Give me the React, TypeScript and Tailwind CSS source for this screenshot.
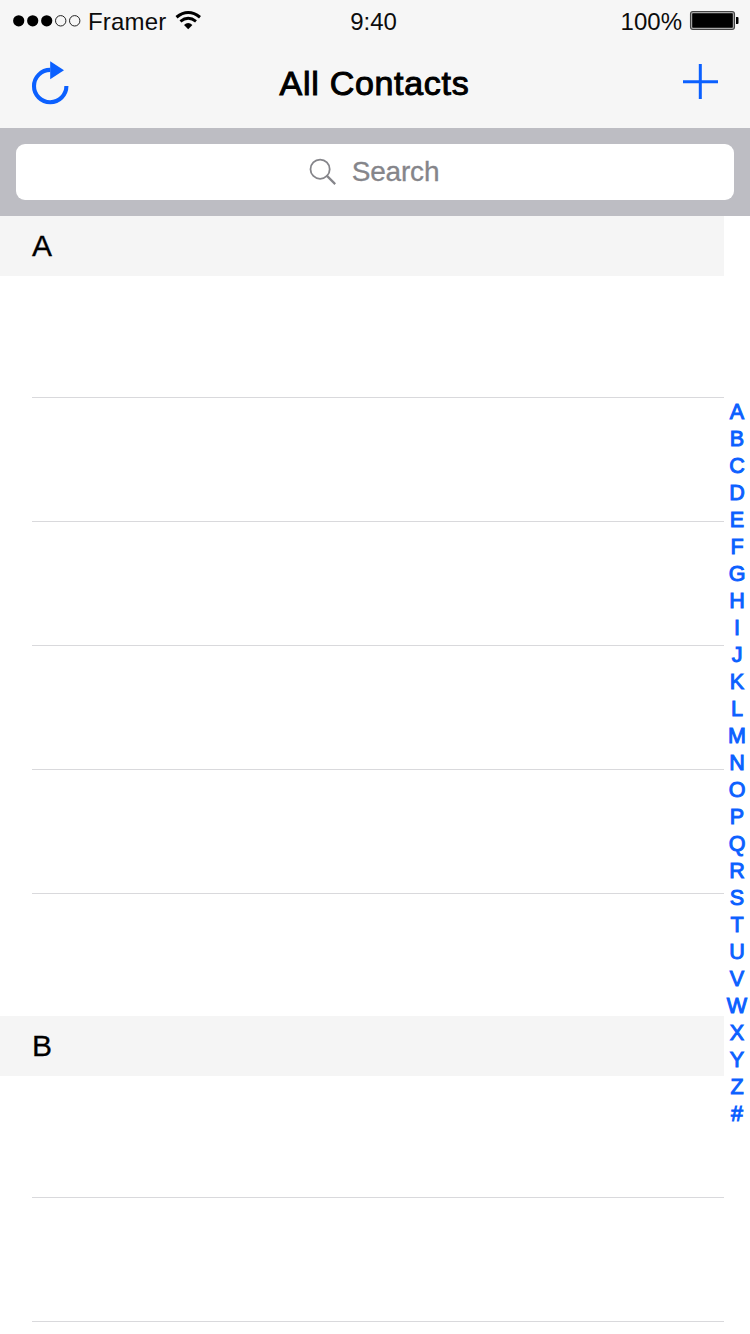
const LETTERS = 'ABCDEFGHIJKLMNOPQRSTUVWXYZ#'.split('');

function StatusBar() {
  return (
    <div className="grid h-10 grid-cols-3 items-start text-[24px] leading-[28px] text-[#0c0c0c]">
      <div className="flex pt-2 pl-3">
        <svg className="mt-[5px] h-4 w-[70px] shrink-0" viewBox="12 13 70 16" aria-hidden="true">
          <circle cx="18.7" cy="20.8" r="5.6" fill="#000" />
          <circle cx="32.7" cy="20.8" r="5.6" fill="#000" />
          <circle cx="46.7" cy="20.8" r="5.6" fill="#000" />
          <circle cx="60.7" cy="20.8" r="5.2" fill="none" stroke="#222" strokeWidth="1" />
          <circle cx="74.7" cy="20.8" r="5.2" fill="none" stroke="#222" strokeWidth="1" />
        </svg>
        <span className="ml-1.5 w-[79px] tracking-[0.2px]">Framer</span>
        <svg className="mt-0.5 ml-[7px] h-5 w-7 shrink-0" viewBox="174 10 28 20" aria-hidden="true">
          <path d="M176.5 17.2Q188.2 7.8 200 17.2" fill="none" stroke="#000" strokeWidth="3.1" />
          <path d="M180.4 21.3Q188.2 15.2 196 21.3" fill="none" stroke="#000" strokeWidth="2.9" />
          <path d="M184 25Q188.2 21 192.4 25L188.2 29.3Z" fill="#000" />
        </svg>
      </div>
      <div className="pt-2 pr-[3px] text-center">9:40</div>
      <div className="flex justify-end pt-2 pr-2.5">
        <span className="mr-[7px]">100%</span>
        <svg className="mt-[2px] h-[22px] w-[51px] shrink-0" viewBox="689 10 51 22" aria-hidden="true">
          <rect x="690.5" y="11.5" width="44" height="18" rx="2.5" fill="#a8a8a8" stroke="#444" strokeWidth="1.1" />
          <rect x="692.2" y="13.2" width="40.6" height="14.6" rx="0.8" fill="#000" />
          <path d="M736 17h1.5q1 0 1 1v5q0 1-1 1h-1.5z" fill="#000" />
        </svg>
      </div>
    </div>
  );
}

function NavBar() {
  return (
    <div className="flex h-[88px] items-start justify-between">
      <button className="pt-5 pl-[30px]" aria-label="Refresh">
        <svg className="h-[46px] w-10" viewBox="30 60 40 46">
          <path d="M50.3 69.9A16.2 16.2 0 1 0 66.4 86.1" fill="none" stroke="#0b60ff" strokeWidth="4.1" />
          <path d="M50.2 61.2L64 70.3L50.2 79.2Z" fill="#0b60ff" />
        </svg>
      </button>
      <h1 className="pt-6 pr-[3px] text-[34px] leading-[38px] tracking-[0.7px] text-black [-webkit-text-stroke:1px_#000]">
        All Contacts
      </h1>
      <button className="pt-[23px] pr-[31px]" aria-label="Add contact">
        <svg className="h-[37px] w-[37px]" viewBox="682 63 37 37">
          <path d="M683 81.7H718M700.3 64V99" fill="none" stroke="#0b60ff" strokeWidth="3" />
        </svg>
      </button>
    </div>
  );
}

function SearchBar() {
  return (
    <div className="h-[88px] bg-[#bdbdc3] p-4">
      <div className="flex h-14 items-center justify-center rounded-[9px] bg-white pr-0.5 text-[#85858a]">
        <svg className="mr-4 h-[30px] w-[27px]" viewBox="309 157 27 30" aria-hidden="true">
          <circle cx="320.1" cy="169.2" r="9.6" fill="none" stroke="currentColor" strokeWidth="1.8" />
          <path d="M326.5 175.4L335.2 184.1" fill="none" stroke="currentColor" strokeWidth="2.2" />
        </svg>
        <span className="text-[28px] leading-8 tracking-[-0.2px] [-webkit-text-stroke:0.3px_#85858a]">Search</span>
      </div>
    </div>
  );
}

function Section({ letter, rows }: { letter: string; rows: number }) {
  return (
    <section>
      <h2 className="flex h-[60px] items-center bg-[#f5f5f5] pl-8 text-[30px] leading-none text-black [-webkit-text-stroke:0.3px_#000]">
        {letter}
      </h2>
      <ul>
        {Array.from({ length: rows }, (_, i) => (
          <li
            key={i}
            className="ml-8 h-[124px] border-b border-[#d9d9dc] first:h-[122px] nth-[6]:h-[122px] nth-[6]:border-b-0"
          />
        ))}
      </ul>
    </section>
  );
}

export default function App() {
  return (
    <main className="h-[1334px] w-[750px] overflow-hidden bg-white font-['Liberation_Sans',Arial,sans-serif]">
      <header className="bg-[#f6f6f6]">
        <StatusBar />
        <NavBar />
      </header>
      <SearchBar />
      <div className="flex">
        <div className="w-[724px]">
          <Section letter="A" rows={6} />
          <Section letter="B" rows={3} />
        </div>
        <nav className="flex w-[26px] flex-col items-center pt-[183px] text-[21.5px] text-[#0b60ff] [-webkit-text-stroke:1px_#0b60ff]">
          {LETTERS.map((letter) => (
            <span key={letter} className="h-[27px] leading-[27px]">
              {letter}
            </span>
          ))}
        </nav>
      </div>
    </main>
  );
}
